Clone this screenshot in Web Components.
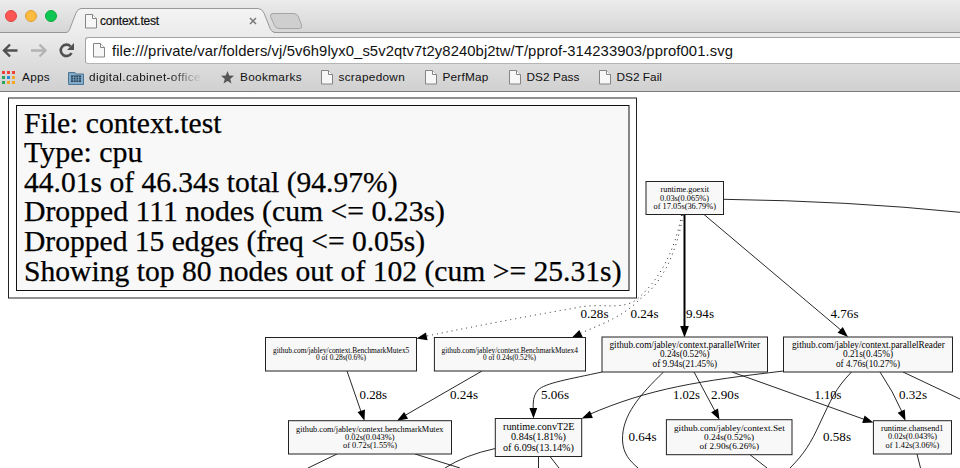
<!DOCTYPE html>
<html lang="en">
<head>
<meta charset="utf-8">
<title>context.test</title>
<style>
html,body{margin:0;height:100%;overflow:hidden;background:#fff}
body{font-family:"Liberation Sans",Arial,sans-serif;color:#111}
</style>
</head>
<body>
<browser-window>
  <tab-strip slot="tabs"><browser-tab><fit-text width="59">context.test</fit-text></browser-tab></tab-strip>
  <nav-bar slot="nav"><fit-text width="621">file:///private/var/folders/vj/5v6h9lyx0_s5v2qtv7t2y8240bj2tw/T/pprof-314233903/pprof001.svg</fit-text></nav-bar>
  <bookmarks-bar slot="marks">
    <book-mark icon="apps" style="width:66px"><fit-text width="28">Apps</fit-text></book-mark>
    <book-mark icon="folder" fade style="width:153px"><fit-text width="112">digital.cabinet-office</fit-text></book-mark>
    <book-mark icon="star" style="width:99.5px"><fit-text width="62">Bookmarks</fit-text></book-mark>
    <book-mark icon="doc" style="width:104px"><fit-text width="66.5">scrapedown</fit-text></book-mark>
    <book-mark icon="doc" style="width:84px"><fit-text width="46">PerfMap</fit-text></book-mark>
    <book-mark icon="doc" style="width:90px"><fit-text width="53">DS2 Pass</fit-text></book-mark>
    <book-mark icon="doc" style="width:70px"><fit-text width="45.5">DS2 Fail</fit-text></book-mark>
  </bookmarks-bar>
  <profile-graph></profile-graph>
</browser-window>
<script>
const define = (name, html, ready) => customElements.define(name, class extends HTMLElement {
  connectedCallback() {
    if (this.shadowRoot) return;
    this.attachShadow({mode: 'open'}).innerHTML = html;
    if (ready) ready.call(this, this.shadowRoot);
  }
});
const DOC = '<svg width="12" height="15" viewBox="0 0 12 15"><path d="M.5.5H7.500L11.500 4.500V14H.5Z" fill="#f7f7f7" stroke="#858585"/><path d="M7.500.5V4.500H11.500" fill="#fff" stroke="#858585"/></svg>';

define('browser-window', `<style>
:host{display:flex;flex-direction:column;width:960px;height:468px;overflow:hidden}
.top{display:flex;flex-direction:column}
.tools{background:linear-gradient(#ececec,#dedede 50%,#d0d0d0);height:58px;border-bottom:1px solid #7b7b7b;display:flex;flex-direction:column}
</style><div class="top"><slot name="tabs"></slot><div class="tools"><slot name="nav"></slot><slot name="marks"></slot></div></div><slot></slot>`);

define('tab-strip', `<style>
:host{display:flex;height:33px;background:linear-gradient(#ececec,#d5d5d5);box-shadow:inset 0 -1px #979797}
.lights{display:flex;gap:8px;padding:9.5px 0 0 5px;width:66px;box-sizing:border-box}
i{width:12px;height:12px;border-radius:50%;flex:none;box-sizing:border-box}
.r{background:#fc5753;border:1px solid #df4744}.y{background:#fdbc40;border:1px solid #de9f34}.g{background:#0fc650;border:1px solid #12a93d}
.new{margin:12px 0 0 -8px}
</style><div class="lights"><i class="r"></i><i class="y"></i><i class="g"></i></div><slot></slot>
<svg class="new" width="36" height="19"><path d="M5 1.500H26Q29 1.500 30.500 5L33.500 13Q34.500 16.500 31.500 16.500H11Q8 16.500 6.500 13.500L2.500 4.500Q2 1.500 5 1.500Z" fill="#cfcfcf" stroke="#a5a5a5"/></svg>`);

define('browser-tab', `<style>
:host{display:grid;width:210px;height:33px;font-size:12px}
svg.bg,.in{grid-area:1/1}
.in{display:flex;align-items:flex-start;padding:14px 19px 0 19px}
.in span{margin-left:3px;line-height:15px;flex:1;-webkit-text-stroke:.2px #111}
.x{margin-top:3px}
</style><svg class="bg" width="210" height="33"><defs><linearGradient id="g" x2="0" y2="1"><stop stop-color="#f4f4f4"/><stop offset="1" stop-color="#ececec"/></linearGradient></defs>
<path d="M0 33C3 32 3.500 30 4.500 27L10 13Q12 8.500 15 8.500H192Q196 8.500 198 13L203.500 27C204.500 30 206 32 209 33Z" fill="url(#g)"/>
<path d="M0 32.500C3 32 3.500 30 4.500 27L10 13Q12 8.500 15 8.500H192Q196 8.500 198 13L203.500 27C204.500 30 206 32 209 32.500" fill="none" stroke="#999"/></svg>
<div class="in">${DOC}<span><slot></slot></span><svg class="x" width="8" height="8"><path d="M1 1L7 7M7 1L1 7" stroke="#777" stroke-width="1.500"/></svg></div>`);

define('nav-bar', `<style>
:host{display:flex;height:31px}
.btn{width:85px;flex:none}
.url{flex:1;margin-top:4px;height:27px;box-sizing:border-box;border:1px solid #a3a3a3;border-right:0;border-bottom-color:#b5b5b5;border-radius:3px 0 0 3px;background:#fff;display:flex;align-items:center;gap:7px;padding-left:7px;font-size:14.800px}
.url svg{flex:none}
</style><svg class="btn" width="85" height="31" fill="none" stroke-width="2.400">
<path d="M17.500 17.500H4.500M10 11.500L4 17.500L10 23.500" stroke="#505050"/>
<path d="M31 17.500H44.500M39.500 11.500L45.500 17.500L39.500 23.500" stroke="#b3b3b3"/>
<path d="M70.500 13.300A5.700 5.700 0 1 0 71.500 20" stroke="#505050" stroke-width="2.600"/><path d="M74 10V17H67Z" fill="#505050"/></svg>
<div class="url">${DOC}<slot></slot></div>`);

define('bookmarks-bar', `<style>:host{display:flex;height:27px;padding-left:2px;font-size:11.800px;align-items:center}</style><slot></slot>`);

const icons = {
  apps: ['<svg width="14" height="14">' + ['#ef4136','#ef4136','#ef4136','#2aa35c','#2e86d9','#f5a623','#2aa35c','#f5a623','#f5a623'].map((c, i) => `<rect x="${i % 3 * 5}" y="${Math.floor(i / 3) * 5}" width="3" height="3" fill="${c}"/>`).join('') + '</svg>', 6],
  folder: ['<svg width="16" height="14"><path d="M.500 12.500V1.500H7L8 3H15.500V13.500H.500Z" fill="#83abc9" stroke="#4c7695"/><path d="M3 4.500H13V11H3Z" fill="#27445b"/><path d="M5.500 5V11M8 5V11M10.500 5V11M3 6.700H13M3 8.900H13" stroke="#83abc9" stroke-width=".7"/></svg>', 5],
  star: ['<svg width="13" height="13"><path d="M6.500 0L8.200 4.600L13 4.800L9.200 7.900L10.500 12.600L6.500 9.900L2.500 12.600L3.800 7.900L0 4.800L4.800 4.600Z" fill="#555"/></svg>', 6],
  doc: [DOC, 6]
};
define('book-mark', `<style>
:host{display:flex;align-items:center;flex:none;height:15px}
svg{flex:none}
.t{display:block;line-height:15px}
:host([fade]) .t{-webkit-mask-image:linear-gradient(90deg,#000 72%,transparent 101%);mask-image:linear-gradient(90deg,#000 72%,transparent 101%)}
</style><span class="i" style="display:flex"></span><span class="t"><slot></slot></span>`, function (root) {
  const [svg, gap] = icons[this.getAttribute('icon')];
  const i = root.querySelector('.i');
  i.innerHTML = svg;
  i.style.marginRight = gap + 'px';
});

/* Text whose letter spacing is adjusted to fill a given width.
   Defined after its hosts, so that their font sizes already apply when it measures. */
define('fit-text', `<style>:host{display:inline-block;white-space:nowrap}</style><span><slot></slot></span>`, function (root) {
  const span = root.querySelector('span');
  const w = +this.getAttribute('width');
  const n = this.textContent.length;
  this.style.letterSpacing = (w - span.getBoundingClientRect().width) / n + 'px';
});

/* Nodes: box x1,y1,x2,y2, font size, then lines [text, x1, x2, baseline] */
const nodes = [
  [646,181.5,723.5,214.5,8.2,['runtime.goexit',660.5,709,191.7],['0.03s(0.065%)',660,709,200.5],['of 17.05s(36.79%)',653.5,716,208.800]],
  [265.5,337.5,416.5,371,7.4,['github.com/jabley/context.BenchmarkMutex5',273,409.3,352.7],['0 of 0.28s(0.6%)',316,366,359.8]],
  [434.4,337.5,585.5,371,7.4,['github.com/jabley/context.BenchmarkMutex4',441.5,578,352.7],['0 of 0.24s(0.52%)',483,536,359.8]],
  [602,337,767.5,372,9.5,['github.com/jabley/context.parallelWriter',609.5,760,347.6],['0.24s(0.52%)',660,709.5,357.2],['of 9.94s(21.45%)',652.5,717,367]],
  [783.5,337,952.5,372,9.5,['github.com/jabley/context.parallelReader',792,944.700,347.6],['0.21s(0.45%)',843,893,357.2],['of 4.76s(10.27%)',836,900,367]],
  [288.5,420.7,451.5,454,8.2,['github.com/jabley/context.benchmarkMutex',296,443.5,431.500],['0.02s(0.043%)',345,394.5,440],['of 0.72s(1.55%)',343,397,448.300]],
  [495.3,418.5,581.7,456.5,10.8,['runtime.convT2E',503,574.500,429.6],['0.84s(1.81%)',511,566,440],['of 6.09s(13.14%)',503,574,450.7]],
  [666.4,419.7,792,454.7,9,['github.com/jabley/context.Set',674,784.700,430.5],['0.24s(0.52%)',704,754,439.5],['of 2.90s(6.26%)',699.500,759,448.7]],
  [873.4,420.7,951.5,454,8.300,['runtime.chansend1',881,943.500,431],['0.02s(0.043%)',888,937,439.2],['of 1.42s(3.06%)',885.500,939.300,447.500]]
];
const title = [['File: context.test',24,221.5,132.500],['Type: cpu',24,142.500,162],['44.01s of 46.34s total (94.97%)',24,397.500,191.700],['Dropped 111 nodes (cum <= 0.23s)',24,445,221.300],['Dropped 15 edges (freq <= 0.05s)',24,425,250.700],['Showing top 80 nodes out of 102 (cum >= 25.31s)',24,621.500,280.700]];
const labels = [['0.28s',580.5,608.5,318],['0.24s',630.5,658.5,318],['9.94s',686,714,318],['4.76s',830.500,858.500,318],
  ['0.28s',359.5,387,399],['0.24s',450,478,399],['5.06s',541,569,399],['1.02s',673,700,399],['2.90s',711,739,399],['1.10s',814.5,841.5,399],['0.32s',899,927,399],
  ['0.64s',628.5,656.500,441],['0.58s',823,851,441]];
/* Edges: path, arrow tip x,y and direction in degrees */
const edges = [
  ['M723.500 199.300Q850 201 960 212.300'],
  ['M704 214.500L842 331',848,337,42],
  ['M347 371L361.500 413',364.500,420.700,72],
  ['M482 371L404 416',397,420.700,150],
  ['M602 372C570 379 545 383 538 390C533 396 533 402 533.300 411',533.500,418.500,89],
  ['M694 372L716 413',719.500,419.700,62],
  ['M732 372L866 420',873.400,422.500,18],
  ['M783.500 371C700 381 650 388 588 415',581.700,418.500,157],
  ['M851.500 372C835 389 831 400 820 423C811 443 804 454 790 468'],
  ['M880 372Q893 391 903 414',905.500,420.700,66],
  ['M903 372L960 399'],
  ['M663.500 372C640 395 622 415 622.500 440C623 454 630 461 638 468'],
  ['M337 454L308 468'],['M415 454L460 468'],
  ['M495.300 448.500Q465 455 445 468'],
  ['M538.500 456.500V468'],['M550 456.500L559 468'],
  ['M750 454.700L767 468'],['M917 454L920.500 468']
];
define('profile-graph', `<style>
:host{display:block;flex:1;min-height:0;background:#fff}
svg{display:block}
text{font-family:"Liberation Serif","Times New Roman",serif;fill:#000}
</style><svg width="960" height="376" viewBox="0 92 960 376"></svg>`, function (root) {
  const esc = s => s.replace(/</g, '&lt;').replace(/>/g, '&gt;');
  const text = ([s, a, b, y], size) => `<text x="${a}" y="${y}" font-size="${size}" textLength="${b - a}" lengthAdjust="spacingAndGlyphs">${esc(s)}</text>`;
  const tip = (x, y, r, k = 1) => `<path transform="translate(${x} ${y}) rotate(${r}) scale(${k})" d="M0 0L-10.500 -3.900V3.900Z"/>`;
  let out = '<rect x="8.500" y="98" width="628" height="200" fill="#fff" stroke="#222"/><rect x="16.500" y="105.500" width="612.500" height="185" fill="#f8f8f8" stroke="#111"/>';
  out += '<g stroke="#000" stroke-width=".25">' + title.map(t => text(t, 29)).join('') + '</g>';
  out += edges.map(([d, x, y, r]) => `<path d="${d}" fill="none" stroke="#111" stroke-width=".9"/>` + (r ? tip(x, y, r) : '')).join('');
  out += '<path d="M684.500 214.500V328" stroke="#000" stroke-width="2"/>' + tip(684.5, 337.5, 90, 1.1);
  out += '<g fill="none" stroke="#222" stroke-width="1" stroke-dasharray="1 4"><path d="M681.500 215C675 250 660 280 636 300C620 311 600 302 575 308Q500 321 427 336"/><path d="M683 215C677 250 664 282 640 299C625 315 605 323 581 333"/></g>';
  out += tip(416.5, 338.5, 168) + tip(571.5, 338, 155);
  out += nodes.map(([a, b, c, d, size, ...lines]) => `<rect x="${a}" y="${b}" width="${c - a}" height="${d - b}" fill="#f8f8f8" stroke="#222"/>` + lines.map(l => text(l, size)).join('')).join('');
  out += labels.map(l => text(l, 13.3)).join('');
  root.querySelector('svg').innerHTML = out;
});
</script>
</body>
</html>
